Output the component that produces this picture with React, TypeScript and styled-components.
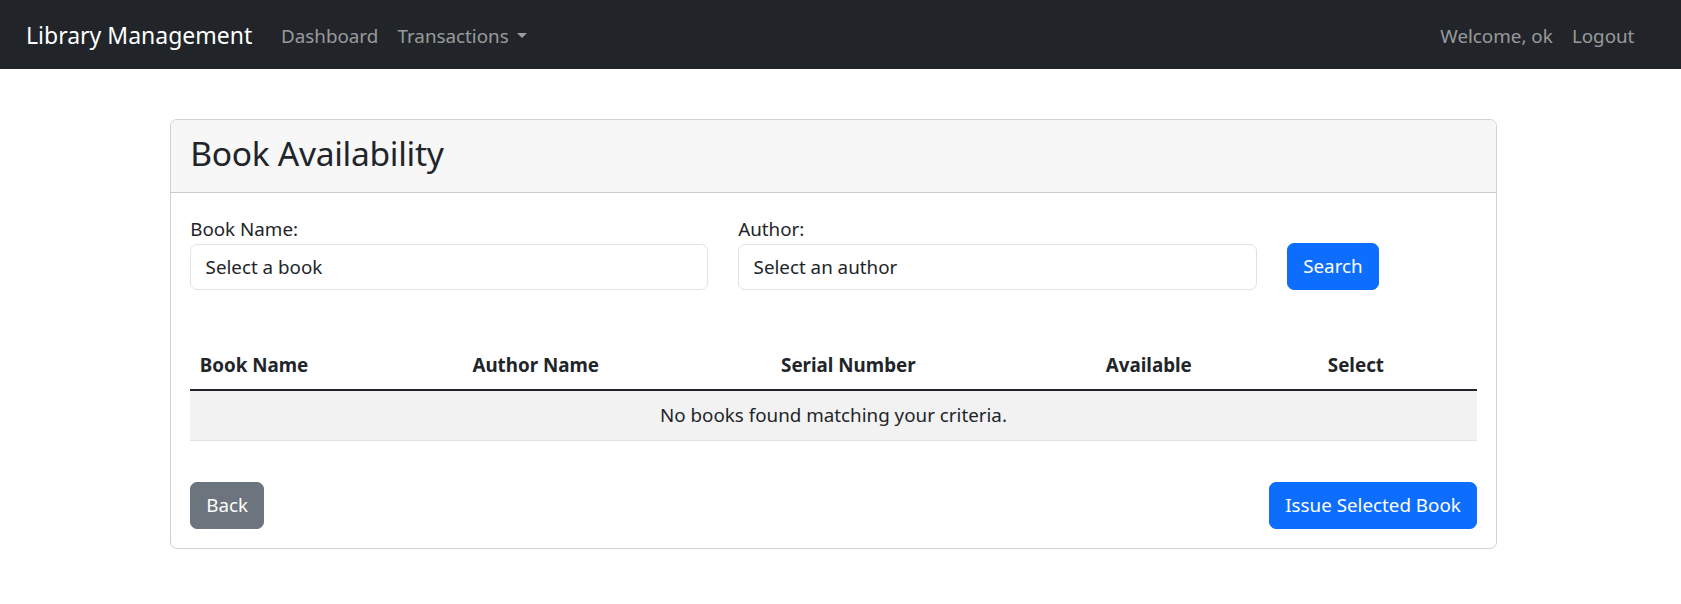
import React from "react";
import styled, { createGlobalStyle } from "styled-components";

const GlobalStyle = createGlobalStyle`
  * { box-sizing: border-box; }
  body {
    margin: 0;
    background: #fff;
    color: #212529;
    font-family: "Segoe UI", "Noto Sans", "Open Sans", sans-serif;
    font-size: 18.8px;
    line-height: 28.8px;
  }
`;

const Navbar = styled.nav`
  display: flex;
  align-items: center;
  height: 69px;
  padding: 1px 37px 0 26px;
  background: #212529;
`;

const Brand = styled.a`
  font-size: 23px;
  line-height: 36px;
  color: #fff;
  text-decoration: none;
  margin-right: 19.2px;
`;

const NavGroup = styled.div<{ $right?: boolean }>`
  display: flex;
  align-items: center;
  padding-top: 2px;
  margin-left: ${(p) => (p.$right ? "auto" : "0")};
`;

const NavLink = styled.a<{ $caret?: boolean }>`
  display: inline-flex;
  align-items: center;
  padding: 0 9.6px;
  color: rgba(255, 255, 255, 0.55);
  text-decoration: none;
  font-size: 18.8px;
  &::after {
    content: "";
    display: ${(p) => (p.$caret ? "inline-block" : "none")};
    margin-left: 8px;
    border-top: 5.76px solid rgba(255, 255, 255, 0.55);
    border-left: 5.76px solid transparent;
    border-right: 5.76px solid transparent;
  }
`;

const Main = styled.main`
  padding-top: 50px;
`;

const Card = styled.section`
  width: 1327px;
  margin-left: 170px;
  border: 1px solid rgba(0, 0, 0, 0.175);
  border-radius: 7px;
  overflow: hidden;
`;

const CardHeader = styled.header`
  padding: 13px 19.2px 19px;
  background: #f7f7f7;
  border-bottom: 1px solid rgba(0, 0, 0, 0.175);
`;

const Title = styled.h2`
  margin: 0;
  font-size: 33.6px;
  line-height: 40px;
  font-weight: 400;
  letter-spacing: -0.3px;
`;

const CardBody = styled.div`
  padding: 19.2px;
`;

const FormRow = styled.div`
  display: grid;
  grid-template-columns: 518px 519px 1fr;
  column-gap: 30px;
  align-items: end;
  padding-top: 3px;
`;

const Field = styled.div`
  display: flex;
  flex-direction: column;
`;

const Label = styled.label`
  display: block;
  line-height: 28.8px;
`;

const Input = styled.input`
  height: 46px;
  padding: 0 14.4px;
  border: 1px solid #dee2e6;
  border-radius: 7px;
  font: inherit;
  color: #212529;
  background: #fff;
  outline: none;
  &::placeholder {
    color: #212529;
    opacity: 1;
  }
`;

const Button = styled.button<{ $variant?: "primary" | "secondary" }>`
  height: 47px;
  padding: 0 15px;
  border: 1px solid ${(p) => (p.$variant === "secondary" ? "#6c757d" : "#0d6efd")};
  border-radius: 7px;
  background: ${(p) => (p.$variant === "secondary" ? "#6c757d" : "#0d6efd")};
  color: #fff;
  font: inherit;
  cursor: pointer;
  justify-self: start;
`;

const Table = styled.table`
  width: 100%;
  margin-top: 51px;
  border-collapse: collapse;
  table-layout: fixed;
`;

const Col = styled.col<{ $w: number }>`
  width: ${(p) => p.$w}px;
`;

const Th = styled.th`
  padding: 9.6px;
  text-align: left;
  font-weight: 700;
  line-height: 28.8px;
  border-bottom: 2px solid #212529;
`;

const EmptyCell = styled.td`
  padding: 9.6px 9.6px 10.6px;
  text-align: center;
  line-height: 28.8px;
  background: #f2f2f2;
  border-bottom: 1px solid #dee2e6;
`;

const Footer = styled.div`
  display: flex;
  justify-content: space-between;
  margin-top: 41px;
`;

export default function App() {
  return (
    <>
      <GlobalStyle />
      <Navbar>
        <Brand href="#">Library Management</Brand>
        <NavGroup>
          <NavLink href="#">Dashboard</NavLink>
          <NavLink href="#" $caret>
            Transactions
          </NavLink>
        </NavGroup>
        <NavGroup $right>
          <NavLink as="span">Welcome, ok</NavLink>
          <NavLink href="#">Logout</NavLink>
        </NavGroup>
      </Navbar>
      <Main>
        <Card>
          <CardHeader>
            <Title>Book Availability</Title>
          </CardHeader>
          <CardBody>
            <FormRow>
              <Field>
                <Label htmlFor="book">Book Name:</Label>
                <Input id="book" placeholder="Select a book" />
              </Field>
              <Field>
                <Label htmlFor="author">Author:</Label>
                <Input id="author" placeholder="Select an author" />
              </Field>
              <Button $variant="primary">Search</Button>
            </FormRow>
            <Table>
              <colgroup>
                <Col $w={272.5} />
                <Col $w={308.5} />
                <Col $w={324.5} />
                <Col $w={222} />
                <Col $w={158.5} />
              </colgroup>
              <thead>
                <tr>
                  <Th>Book Name</Th>
                  <Th>Author Name</Th>
                  <Th>Serial Number</Th>
                  <Th>Available</Th>
                  <Th>Select</Th>
                </tr>
              </thead>
              <tbody>
                <tr>
                  <EmptyCell colSpan={5}>No books found matching your criteria.</EmptyCell>
                </tr>
              </tbody>
            </Table>
            <Footer>
              <Button $variant="secondary">Back</Button>
              <Button $variant="primary">Issue Selected Book</Button>
            </Footer>
          </CardBody>
        </Card>
      </Main>
    </>
  );
}
